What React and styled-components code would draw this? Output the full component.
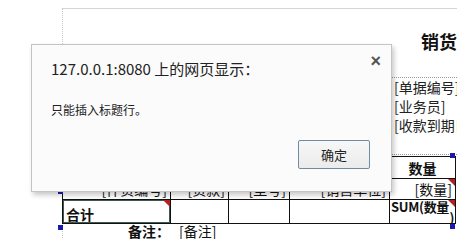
import styled, { createGlobalStyle } from "styled-components"

const Global = createGlobalStyle`
body {
  margin: 0;
  background: #fff;
  font-family: "Noto Sans CJK SC", "Liberation Sans", sans-serif;
}
`

const Page = styled.div`
position: relative;
width: 457px;
height: 239px;
overflow: hidden;
background: #fff;
padding: 8px 0 0 62px;
box-sizing: border-box;
`

const Sheet = styled.div`
border-top: 1px solid #d4d4d4;
border-left: 1px dotted #c8c8c8;
height: 100%;
`

const Header = styled.div`
height: 146px;
border-bottom: 1px dotted #9a9a9a;
box-sizing: border-box;
`

const Title = styled.div`
padding: 20px 0 0 358px;
height: 24px;
line-height: 24px;
font-size: 18px;
font-weight: 700;
color: #111;
white-space: nowrap;
`

const InfoList = styled.div`
margin: 24px 0 0 329px;
border-top: 1px dotted #9a9a9a;
`

const InfoRow = styled.div`
height: 19px;
line-height: 19px;
font-size: 14px;
color: #222;
white-space: nowrap;
padding-left: 2px;
`

const Table = styled.table`
border-collapse: collapse;
table-layout: fixed;
width: 393px;
margin-left: -1px;
margin-top: 1px;
`

const Row = styled.tr`
height: ${p => p.$h}px;
`

const Cell = styled.td`
position: relative;
border: 1px solid #111;
padding: 0 ${p => (p.$small ? 1 : 3)}px;
font-size: ${p => (p.$small ? 13 : 14)}px;
line-height: ${p => (p.$small ? 11 : 18)}px;
font-weight: ${p => (p.$bold ? 700 : 400)};
text-align: ${p => p.$align || "left"};
vertical-align: ${p => p.$valign || "middle"};
color: #111;
white-space: nowrap;
overflow: hidden;
box-shadow: ${p => (p.$selected ? "inset 0 0 0 1px #3d5a4f" : "none")};
`

const SumBox = styled.div`
height: 23px;
overflow: hidden;
`

const SumLine = styled.div`
text-align: ${p => p.$align};
padding-top: ${p => p.$top || 0}px;
letter-spacing: -0.3px;
`

const Flag = styled.span`
position: absolute;
top: 0;
right: 0;
width: 0;
height: 0;
border-top: 7px solid #b32020;
border-left: 7px solid transparent;
`

const Handle = styled.span`
position: absolute;
width: 5px;
height: 5px;
background: #1a1ab0;
left: ${p => p.$x}px;
top: ${p => p.$y}px;
`

const Notes = styled.div`
display: grid;
grid-template-columns: 107px 1fr;
column-gap: 9px;
margin-top: -2px;
height: 18px;
line-height: 18px;
font-size: 14px;
color: #111;
`

const NoteLabel = styled.span`
text-align: right;
font-weight: 700;
`

const Dialog = styled.div`
position: absolute;
left: 31px;
top: 44px;
width: 361px;
height: 148px;
box-sizing: border-box;
background: #fbfbfb;
border: 1px solid #c4c4c4;
box-shadow: 2px 3px 5px rgba(0, 0, 0, 0.22);
padding: 13px 21px 0 19px;
display: flex;
flex-direction: column;
`

const DialogTitle = styled.div`
font-size: 15px;
line-height: 22px;
color: #222;
white-space: nowrap;
`

const Close = styled.span`
position: absolute;
right: 10px;
top: 7px;
font-family: "Liberation Sans", sans-serif;
font-size: 18px;
line-height: 18px;
font-weight: 700;
color: #555;
`

const Message = styled.div`
margin-top: 21px;
font-size: 12px;
line-height: 18px;
color: #222;
`

const Actions = styled.div`
display: flex;
justify-content: flex-end;
margin-top: 21px;
`

const Button = styled.button`
width: 72px;
height: 29px;
border: 1px solid #6f8ca5;
border-radius: 2px;
background: linear-gradient(#f7f7f7, #ebebeb);
font-family: "Noto Sans CJK SC", sans-serif;
font-size: 13px;
color: #222;
padding: 0;
`

const App = () => {
  return (
    <>
      <Global />
      <Page>
        <Sheet>
          <Header>
            <Title>销货单</Title>
            <InfoList>
              <InfoRow>[单据编号]</InfoRow>
              <InfoRow>[业务员]</InfoRow>
              <InfoRow>[收款到期日]</InfoRow>
            </InfoList>
          </Header>
          <Table>
            <colgroup>
              <col style={{ width: 108 }} />
              <col style={{ width: 58 }} />
              <col style={{ width: 61 }} />
              <col style={{ width: 100 }} />
              <col style={{ width: 66 }} />
            </colgroup>
            <tbody>
              <Row $h={22}>
                <Cell $bold $align="center">货品编号</Cell>
                <Cell $bold $align="center">货款</Cell>
                <Cell $bold $align="center">型号</Cell>
                <Cell $bold $align="center">销售单位</Cell>
                <Cell $bold $align="center">数量</Cell>
              </Row>
              <Row $h={21}>
                <Cell $align="right">[件货编号]</Cell>
                <Cell $align="right">[货款]</Cell>
                <Cell $align="right">[型号]</Cell>
                <Cell $align="right">[销售单位]</Cell>
                <Cell $align="right">[数量]<Flag /></Cell>
              </Row>
              <Row $h={23}>
                <Cell $bold $selected $valign="bottom">合计<Flag /></Cell>
                <Cell />
                <Cell />
                <Cell />
                <Cell $bold $small $valign="top">
                  <SumBox>
                    <SumLine $align="left" $top={1}>SUM(数量</SumLine>
                    <SumLine $align="right">)</SumLine>
                  </SumBox>
                  <Flag />
                </Cell>
              </Row>
            </tbody>
          </Table>
          <Notes>
            <NoteLabel>备注：</NoteLabel>
            <span>[备注]</span>
          </Notes>
        </Sheet>
        <Handle $x={58} $y={189} />
        <Handle $x={58} $y={225} />
        <Handle $x={450} $y={153} />
        <Handle $x={450} $y={224} />
        <Dialog>
          <Close>×</Close>
          <DialogTitle>127.0.0.1:8080 上的网页显示：</DialogTitle>
          <Message>只能插入标题行。</Message>
          <Actions>
            <Button>确定</Button>
          </Actions>
        </Dialog>
      </Page>
    </>
  )
}

export default App
